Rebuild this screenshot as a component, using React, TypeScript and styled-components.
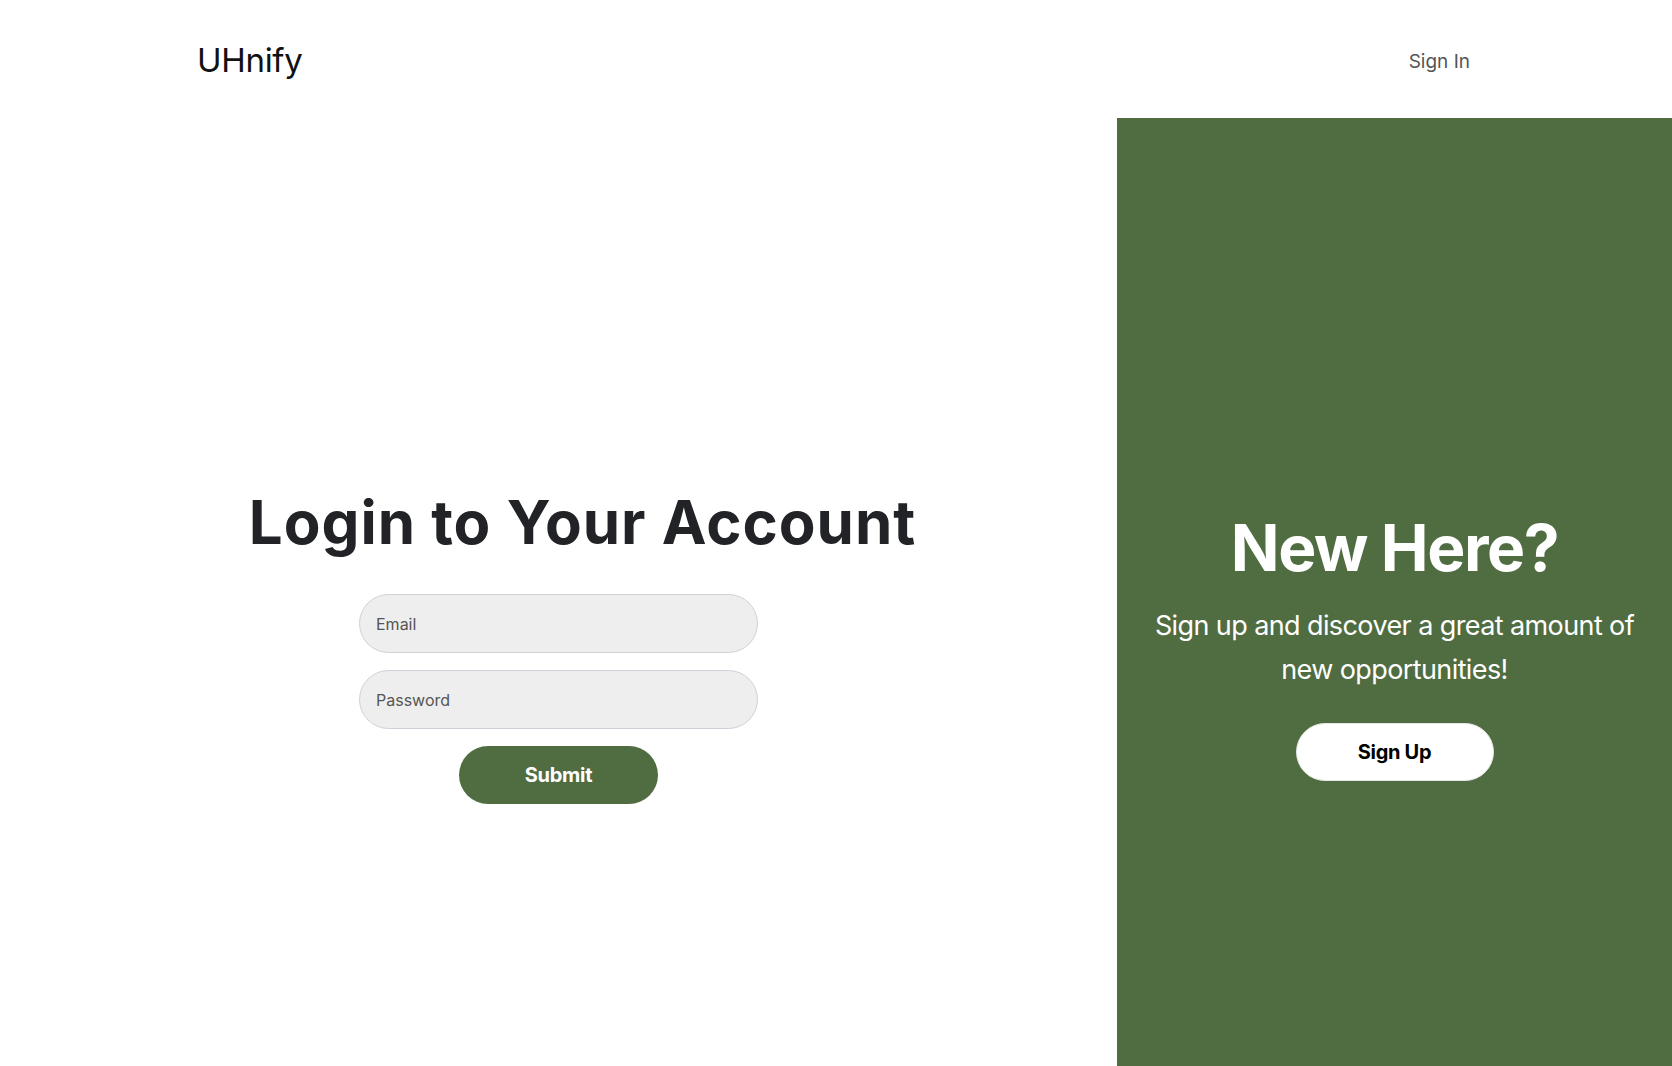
import React from "react";
import styled, { createGlobalStyle } from "styled-components";

const GREEN = "#506c41";

const Global = createGlobalStyle`
  html, body { margin: 0; padding: 0; background: #ffffff; }
  body { font-family: Inter, "Liberation Sans", sans-serif; }
  * { box-sizing: border-box; }
`;

const Page = styled.div`
  width: 1672px;
  height: 1066px;
  display: flex;
  flex-direction: column;
  overflow: hidden;
`;

const Header = styled.header`
  height: 118px;
  flex: none;
  display: flex;
  align-items: flex-start;
  justify-content: space-between;
  padding: 40px 202px 0 197px;
`;

const Logo = styled.div`
  font-family: Inter, "Liberation Sans", sans-serif;
  font-size: 33px;
  font-weight: 400;
  color: #111;
  line-height: 40px;
  letter-spacing: -0.3px;
`;

const NavLink = styled.a`
  font-family: Inter, "Liberation Sans", sans-serif;
  font-size: 19px;
  color: #555;
  text-decoration: none;
  line-height: 24px;
  margin-top: 10px;
`;

const Main = styled.main`
  flex: 1;
  display: grid;
  grid-template-columns: 1117px 1fr;
`;

const LeftPane = styled.section`
  display: flex;
  flex-direction: column;
  align-items: center;
  padding-top: 366px;
`;

const Title = styled.h1`
  margin: 0 0 0 48px;
  font-family: Inter, "Liberation Sans", sans-serif;
  font-weight: 700;
  font-size: 60px;
  line-height: 76px;
  letter-spacing: 1px;
  color: #222327;
  white-space: nowrap;
`;

const Form = styled.form`
  display: flex;
  flex-direction: column;
  align-items: center;
  gap: 17px;
  margin-top: 34px;
`;

const Input = styled.input`
  width: 399px;
  height: 59px;
  border-radius: 30px;
  border: 1px solid #cdd1d8;
  background: #eeeeee;
  padding: 0 16px;
  font-family: Inter, "Liberation Sans", sans-serif;
  font-size: 16px;
  color: #333;
  outline: none;
  &::placeholder { color: #555; }
`;

const Pill = styled.button<{ $light?: boolean }>`
  width: ${(p) => (p.$light ? "198px" : "199px")};
  height: 58px;
  border-radius: 30px;
  border: ${(p) => (p.$light ? "1px solid #e6e6e6" : "none")};
  background: ${(p) => (p.$light ? "#ffffff" : GREEN)};
  color: ${(p) => (p.$light ? "#000000" : "#ffffff")};
  font-family: Inter, "Liberation Sans", sans-serif;
  font-weight: 700;
  font-size: 20px;
  letter-spacing: -0.3px;
  cursor: pointer;
`;

const RightPane = styled.section`
  background: ${GREEN};
  display: flex;
  flex-direction: column;
  align-items: center;
  padding-top: 392px;
  color: #ffffff;
  text-align: center;
`;

const PaneTitle = styled.h2`
  margin: 0;
  font-family: Inter, "Liberation Sans", sans-serif;
  font-weight: 700;
  font-size: 64px;
  line-height: 76px;
  letter-spacing: -1.4px;
`;

const PaneText = styled.p`
  margin: 18px 0 31px;
  width: 520px;
  font-family: Inter, "Liberation Sans", sans-serif;
  font-size: 27px;
  line-height: 44px;
  letter-spacing: -0.6px;
`;

export default function App() {
  return (
    <Page>
      <Global />
      <Header>
        <Logo>UHnify</Logo>
        <NavLink href="#">Sign In</NavLink>
      </Header>
      <Main>
        <LeftPane>
          <Title>Login to Your Account</Title>
          <Form onSubmit={(e) => e.preventDefault()}>
            <Input type="email" placeholder="Email" />
            <Input type="password" placeholder="Password" />
            <Pill type="submit">Submit</Pill>
          </Form>
        </LeftPane>
        <RightPane>
          <PaneTitle>New Here?</PaneTitle>
          <PaneText>Sign up and discover a great amount of new opportunities!</PaneText>
          <Pill $light type="button">Sign Up</Pill>
        </RightPane>
      </Main>
    </Page>
  );
}
